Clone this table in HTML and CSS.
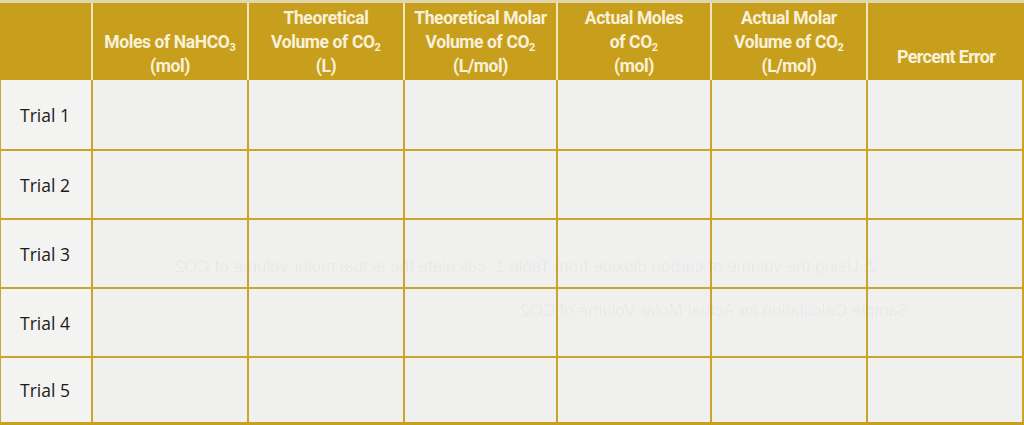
FILE: index.html
```html
<!DOCTYPE html>
<html>
<head>
<meta charset="utf-8">
<link rel="stylesheet" href="styles.css">
</head>
<body>
<div class="page">
  <div class="table">
    <div class="thead">
      <div class="th"></div>
      <div class="th"><span>Moles of NaHCO<sub>3</sub><br>(mol)</span></div>
      <div class="th"><span>Theoretical<br>Volume of CO<sub>2</sub><br>(L)</span></div>
      <div class="th"><span>Theoretical Molar<br>Volume of CO<sub>2</sub><br>(L/mol)</span></div>
      <div class="th"><span>Actual Moles<br>of CO<sub>2</sub><br>(mol)</span></div>
      <div class="th"><span>Actual Molar<br>Volume of CO<sub>2</sub><br>(L/mol)</span></div>
      <div class="th th-single"><span>Percent Error</span></div>
    </div>
    <div class="row row-first">
      <div class="td label">Trial 1</div><div class="td"></div><div class="td"></div><div class="td"></div><div class="td"></div><div class="td"></div><div class="td"></div>
    </div>
    <div class="row">
      <div class="td label">Trial 2</div><div class="td"></div><div class="td"></div><div class="td"></div><div class="td"></div><div class="td"></div><div class="td"></div>
    </div>
    <div class="row">
      <div class="td label">Trial 3</div><div class="td"></div><div class="td"></div><div class="td"></div><div class="td"></div><div class="td"></div><div class="td"></div>
    </div>
    <div class="row">
      <div class="td label">Trial 4</div><div class="td"></div><div class="td"></div><div class="td"></div><div class="td"></div><div class="td"></div><div class="td"></div>
    </div>
    <div class="row row-last">
      <div class="td label">Trial 5</div><div class="td"></div><div class="td"></div><div class="td"></div><div class="td"></div><div class="td"></div><div class="td"></div>
    </div>
  </div>
  <div class="bleed bleed-1">2. Using the volume of carbon dioxide from Table 1, calculate the actual molar volume of CO2.</div>
  <div class="bleed bleed-2">Sample Calculation for Actual Molar Volume of CO2</div>
</div>
</body>
</html>
```

FILE: styles.css
```css
html, body {
  margin: 0;
  padding: 0;
  background: #efefed;
}
.page {
  position: relative;
  width: 1024px;
  height: 425px;
  overflow: hidden;
}
.table {
  display: flex;
  flex-direction: column;
  width: 1024px;
  background: #cba52a;
  border-top: 3px solid #e2d6ac;
  border-bottom: 3px solid #c9a11e;
  box-sizing: border-box;
}
.thead, .row {
  display: grid;
  grid-template-columns: 90px 154px 154px 151px 152px 154px 1fr;
  column-gap: 2px;
  padding: 0 2px 0 1px;
}
.thead {
  background: #f1e6bc;
  padding: 0;
  grid-template-columns: 91px 154px 154px 151px 152px 154px 1fr;
}
.th {
  background: #c89f1c;
  height: 77px;
  display: flex;
  align-items: flex-end;
  justify-content: center;
  text-align: center;
  padding-bottom: 2px;
  box-sizing: border-box;
  font-family: "Roboto", "Liberation Sans", sans-serif;
  font-weight: 700;
  font-size: 17.5px;
  line-height: 24px;
  color: #f8f1da;
  letter-spacing: -0.4px;
  white-space: nowrap;
}
.th sub {
  font-size: 11px;
  vertical-align: -3px;
  line-height: 0;
  letter-spacing: 0;
}
.th-single {
  padding-bottom: 11px;
  font-size: 18px;
  letter-spacing: -0.7px;
}
.row {
  margin-top: 2px;
}
.row-first {
  margin-top: 0;
}
.td {
  background: #f0f0ee;
  height: 67px;
}
.row-first .td {
  height: 69px;
}
.row-last .td {
  height: 64px;
}
.label {
  background: #f3f3f1;
  display: flex;
  align-items: center;
  padding-left: 19px;
  box-sizing: border-box;
  font-family: "Open Sans", "Noto Sans", sans-serif;
  font-size: 17.5px;
  color: #1a1a1a;
}
.bleed {
  position: absolute;
  transform: scaleX(-1);
  font-family: "Liberation Sans", sans-serif;
  font-size: 17px;
  color: rgba(0, 0, 0, 0.045);
  white-space: nowrap;
}
.bleed-1 {
  left: 170px;
  top: 257px;
}
.bleed-2 {
  left: 520px;
  top: 301px;
}
```
